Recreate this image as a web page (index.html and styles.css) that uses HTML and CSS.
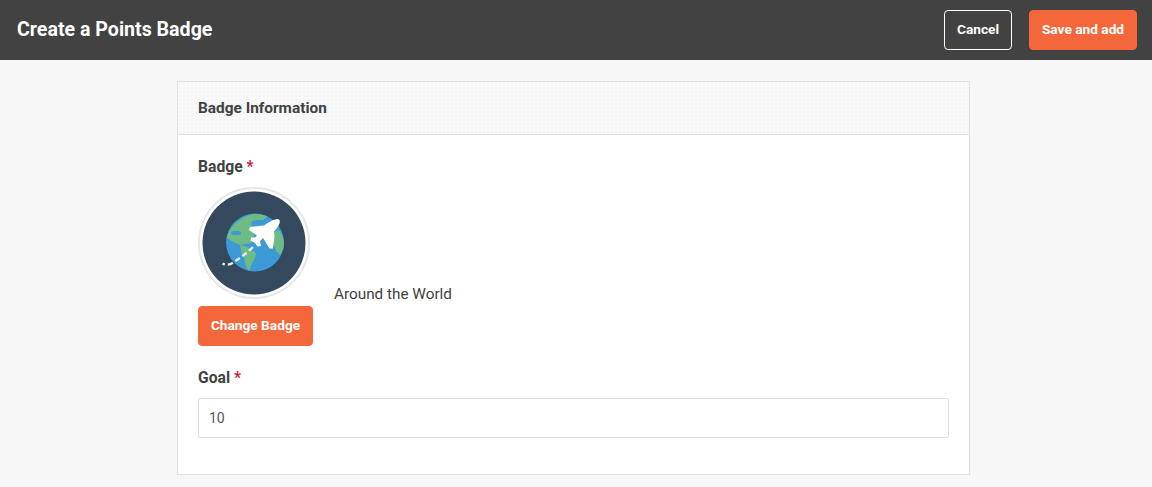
FILE: index.html
```html
<!DOCTYPE html>
<html lang="en">
<head>
<meta charset="utf-8">
<title>Create a Points Badge</title>
<link rel="stylesheet" href="styles.css">
</head>
<body>
<header class="topbar">
  <h1 class="title">Create a Points Badge</h1>
  <div class="actions">
    <button class="btn btn-ghost">Cancel</button>
    <button class="btn btn-primary">Save and add</button>
  </div>
</header>
<main class="main">
  <section class="card">
    <div class="card-head">Badge Information</div>
    <div class="card-body">
      <div class="label label-badge">Badge <span class="req">*</span></div>
      <div class="badge-row">
        <div class="badge-col">
          <div class="badge-ring">
            <svg class="badge-svg" viewBox="0 0 104 104" width="104" height="104">
              <circle cx="52" cy="52" r="51.5" fill="#34495e"/>
              <circle cx="53" cy="51.500" r="29" fill="#3c9ad6"/>
              <path d="M50 23.500 C55 22.500 61 23.500 65 25.500 L61 29 L54 29 L50 30 L49 34 L53 37 L52 42 L52 48 L49 52 L44 53 L38 54 L31 51 L25 47 C27 37 36 27 50 23.500 Z" fill="#6fbb85"/>
              <ellipse cx="34" cy="42" rx="5" ry="2.200" fill="#3c9ad6"/>
              <path d="M38 54 L46 56 L54 62 L53 67 L50 72 L47 80 C44 77 43 72 42 67 L39 60 Z" fill="#6fbb85"/>
              <path d="M70 42 L77 39 C80 43 82 48 82 53 C82 57 80 61 78 64 L74 60 L72 54 Z" fill="#6fbb85"/>
              <path d="M51 56 C45 62 38 67 32 71 C28 74 24 74.500 20.500 72.500" fill="none" stroke="#e4ebee" stroke-width="2.400" stroke-dasharray="5.500 3"/>
              <path d="M75.500 28 C78 28 78.500 31 77 33.500 C76 36 74 38.500 72 40.500 L72.500 45 L71 57.500 L67.500 57.500 L61 47 L58 50 L59 55 L55.500 55.500 L53 52 L48.500 49.500 L49 46.500 L53 46.500 L55 44.500 L47 39 L48 36 L62 34.500 C66 31.500 71 28.500 75.500 28 Z" fill="#fff"/>
            </svg>
          </div>
          <button class="btn btn-primary btn-change">Change Badge</button>
        </div>
        <div class="badge-name">Around the World</div>
      </div>
      <div class="label label-goal">Goal <span class="req">*</span></div>
      <input class="input" type="text" value="10">
    </div>
  </section>
</main>
</body>
</html>
```
FILE: styles.css
```css
* { box-sizing: border-box; }
html, body { margin: 0; height: 100%; }
body {
  background: #f7f7f7;
  font-family: Roboto, "Liberation Sans", sans-serif;
  color: #424242;
  overflow: hidden;
}
.topbar {
  height: 60px;
  background: #424242;
  display: flex;
  align-items: center;
  justify-content: space-between;
  padding: 0 15px 2px 17px;
}
.title {
  margin: 0;
  font-size: 19.6px;
  font-weight: 700;
  color: #fff;
}
.actions { display: flex; gap: 17px; margin-bottom: -2px; }
.btn {
  height: 40px;
  border-radius: 4px;
  font-family: inherit;
  font-size: 13.7px;
  font-weight: 700;
  color: #fff;
  cursor: pointer;
  padding: 0 0 3px;
  white-space: nowrap;
}
.btn-ghost { width: 68px; background: transparent; border: 1px solid #fff; }
.btn-primary { width: 108px; background: #f4673a; border: 1px solid #f4673a; }
.main { padding: 21px 0 0 177px; }
.card {
  width: 793px;
  height: 394px;
  background: #fff;
  border: 1px solid #e0e0e0;
}
.card-head {
  height: 53px;
  display: flex;
  align-items: center;
  padding: 0 20px;
  font-size: 15.4px;
  font-weight: 700;
  border-bottom: 1px solid #e0e0e0;
  background-color: #f9f9f9;
  background-image: radial-gradient(#f3f3f3 1px, transparent 1px);
  background-size: 4px 4px;
}
.card-body { padding: 23px 20px 0; }
.label { font-size: 15.7px; font-weight: 700; line-height: 18px; }
.req { color: #d0213f; }
.badge-row { display: flex; gap: 21px; margin-top: 11px; align-items: flex-end; }
.badge-col { display: flex; flex-direction: column; align-items: flex-start; }
.badge-ring {
  width: 112px;
  height: 112px;
  border: 2px solid #e6e6e6;
  border-radius: 50%;
  display: flex;
  align-items: center;
  justify-content: center;
  margin-bottom: 7px;
}
.badge-svg { display: block; flex: none; }
.btn-change { width: 115px; }
.badge-name { font-size: 15.3px; line-height: 18px; color: #424242; margin-bottom: 43px; }
.label-goal { margin-top: 23px; }
.input {
  display: block;
  width: 751px;
  height: 40px;
  margin-top: 11px;
  border: 1px solid #e0e0e0;
  border-radius: 2px;
  padding: 0 10px;
  font-family: inherit;
  font-size: 14px;
  color: #555;
  background: #fff;
}
```
